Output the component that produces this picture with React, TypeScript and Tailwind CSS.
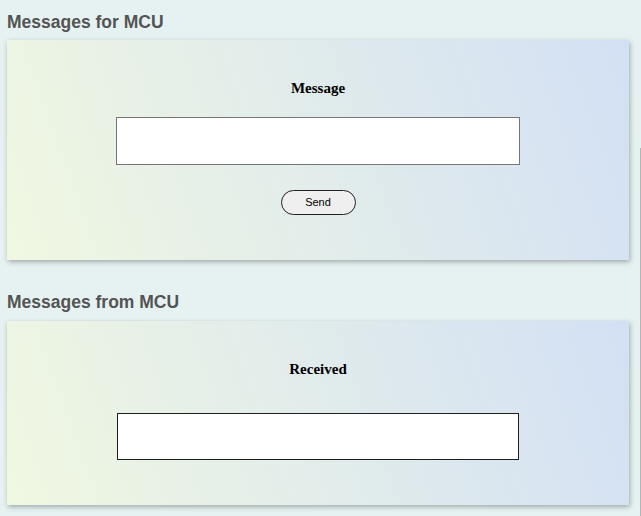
import React from "react";

function Card({ children, className = "" }: { children: React.ReactNode; className?: string }) {
  return (
    <div
      className={
        "mx-[7px] w-[622px] flex flex-col items-center bg-linear-70 from-[#f0f7e1] to-[#d3e0f4] shadow-[1px_2px_5px_rgba(0,0,0,0.3)] " +
        className
      }
    >
      {children}
    </div>
  );
}

export default function App() {
  return (
    <div
      className="relative min-h-[516px] w-full bg-[#e6f2f2] pt-[12px]"
      style={{ fontFamily: '"Liberation Sans", Arial, sans-serif' }}
    >
      <h2 className="ml-[7px] mb-[8px] text-[17.5px] leading-[20px] font-bold text-[#545454]">
        Messages for MCU
      </h2>
      <Card className="h-[220px] pt-[40px]">
        <div
          className="text-[15px] leading-[17px] font-bold text-black"
          style={{ fontFamily: '"Liberation Serif", "Times New Roman", serif' }}
        >
          Message
        </div>
        <input
          type="text"
          className="mt-[20px] h-[48px] w-[404px] border border-[#767676] bg-white outline-none"
        />
        <button className="mt-[25px] h-[25px] w-[75px] rounded-full border border-[#222] bg-[#efefef] text-[11px] text-black">
          Send
        </button>
      </Card>
      <h2 className="ml-[7px] mt-[32px] mb-[9px] text-[17.5px] leading-[20px] font-bold text-[#545454]">
        Messages from MCU
      </h2>
      <Card className="h-[184px] pt-[40px]">
        <div
          className="text-[15px] leading-[17px] font-bold text-black"
          style={{ fontFamily: '"Liberation Serif", "Times New Roman", serif' }}
        >
          Received
        </div>
        <div className="mt-[35px] h-[47px] w-[402px] border border-[#1f1f1f] bg-white" />
      </Card>
      <div className="absolute right-0 top-[148px] bottom-0 w-px bg-[#b5b5b5]" />
    </div>
  );
}
